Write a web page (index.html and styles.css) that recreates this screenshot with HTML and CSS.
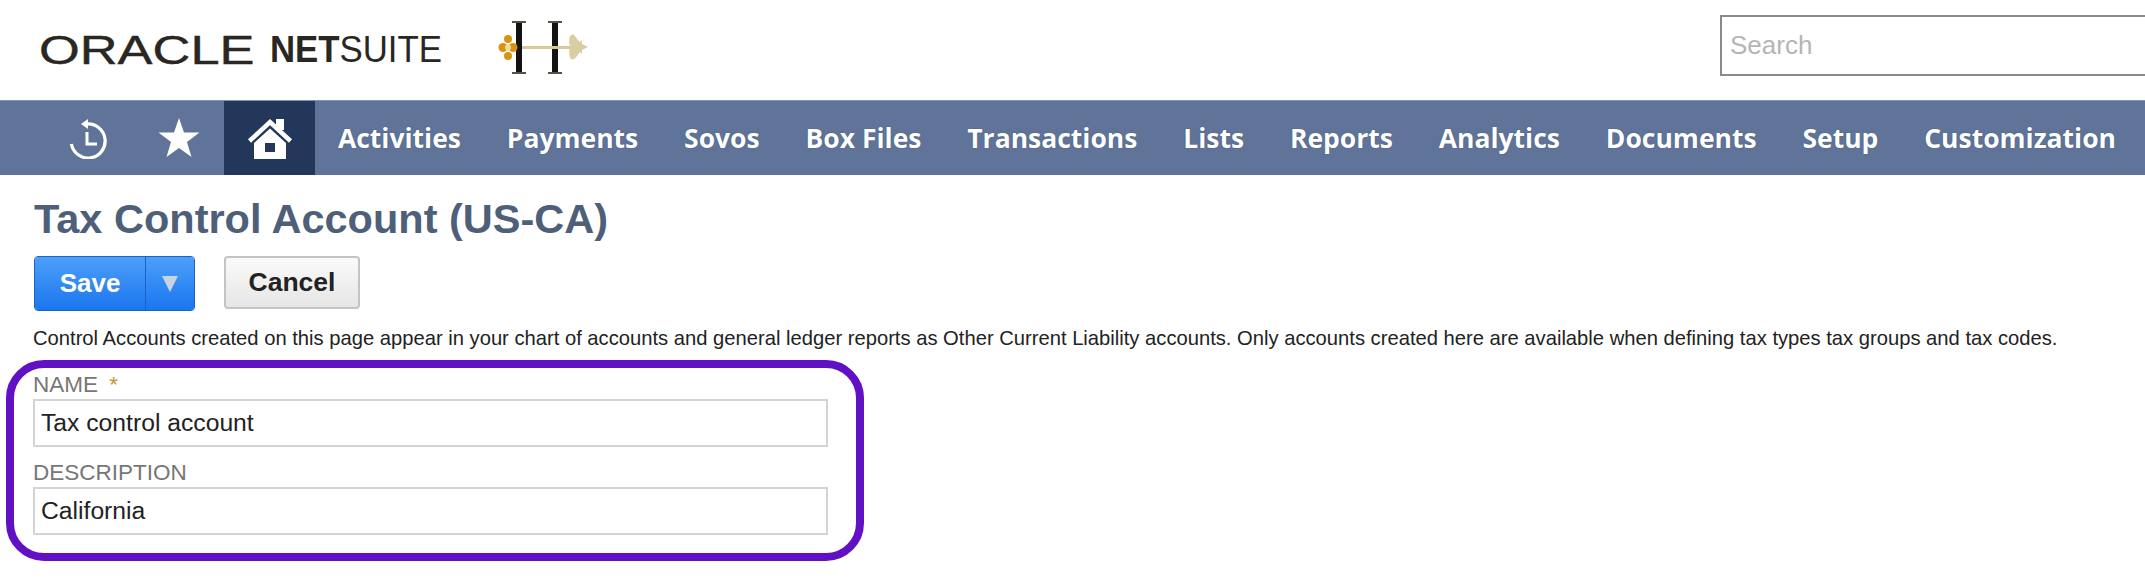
FILE: index.html
```html
<!DOCTYPE html>
<html lang="en">
<head>
    <meta charset="UTF-8">
    <meta name="viewport" content="width=device-width, initial-scale=1.0">
    <title>Tax Control Account (US-CA)</title>
    <link rel="stylesheet" href="styles.css">
</head>
<body>
    <header class="top-bar">
        <div class="logo">
            <span class="logo-oracle">ORACLE</span>
            <span class="logo-netsuite"><b>NET</b>SUITE</span>
        </div>
        <svg class="brand-mark" width="98" height="56" viewBox="0 0 98 56">
            <rect x="24" y="1" width="6" height="51" fill="#15130f"/>
            <rect x="60" y="1" width="6" height="51" fill="#15130f"/>
            <rect x="20" y="0" width="14" height="2" fill="#55524c"/>
            <rect x="20" y="51" width="14" height="2" fill="#55524c"/>
            <rect x="56" y="0" width="14" height="2" fill="#55524c"/>
            <rect x="56" y="51" width="14" height="2" fill="#55524c"/>
            <rect x="30" y="25" width="48" height="3" fill="#d8c998"/>
            <g fill="#d9940f">
                <circle cx="16" cy="18" r="4"/>
                <circle cx="16" cy="35" r="4"/>
                <circle cx="11" cy="26.500" r="4.500"/>
                <circle cx="21" cy="26.500" r="4.500"/>
                <circle cx="16" cy="26.500" r="3" fill="#f0d9a0"/>
            </g>
            <path d="M78 26 C76 18 78 12 82 14 C84 16 86 20 88 21 L90 19 L90 23 L96 26 L90 29 L90 33 L88 31 C86 33 84 37 82 38 C78 40 76 34 78 26 Z" fill="#d9cda4"/>
        </svg>
        <input class="search" type="text" placeholder="Search">
    </header>

    <nav class="main-nav">
        <a class="nav-icon" href="#">
            <svg width="40" height="42" viewBox="0 0 40 42" fill="none" stroke="#fff" stroke-width="3.2">
                <path d="M19 7 A17 17 0 1 1 3.4 27"/>
                <path d="M20 2 L13 7 L20 12 Z" fill="#fff" stroke="none"/>
                <path d="M19 15 V27 H29" stroke-width="3"/>
            </svg>
        </a>
        <a class="nav-icon" href="#">
            <svg width="42" height="40" viewBox="0 0 42 40">
                <polygon points="21,0 26,14.5 41.5,14.5 29,24 33.5,39 21,30 8.5,39 13,24 0.5,14.5 16,14.5" fill="#fff"/>
            </svg>
        </a>
        <a class="nav-icon nav-home" href="#">
            <svg width="46" height="41" viewBox="0 0 46 41">
                <rect x="29" y="1" width="8" height="11" fill="#fff"/>
                <path d="M2.5 23 L23 4 L43.500 23" fill="none" stroke="#fff" stroke-width="4.500"/>
                <path d="M7 25 L23 10.500 L39 25 V41 H7 Z" fill="#fff"/>
                <rect x="18" y="25" width="10" height="9" fill="#22375a"/>
            </svg>
        </a>
        <a class="nav-link" href="#">Activities</a>
        <a class="nav-link" href="#">Payments</a>
        <a class="nav-link" href="#">Sovos</a>
        <a class="nav-link" href="#">Box Files</a>
        <a class="nav-link" href="#">Transactions</a>
        <a class="nav-link" href="#">Lists</a>
        <a class="nav-link" href="#">Reports</a>
        <a class="nav-link" href="#">Analytics</a>
        <a class="nav-link" href="#">Documents</a>
        <a class="nav-link" href="#">Setup</a>
        <a class="nav-link" href="#">Customization</a>
    </nav>

    <main class="content">
        <h1>Tax Control Account (US-CA)</h1>

        <div class="button-row">
            <div class="save-group">
                <button class="btn-save" type="button">Save</button>
                <button class="btn-arrow" type="button" aria-label="More"><span class="arrow"></span></button>
            </div>
            <button class="btn-cancel" type="button">Cancel</button>
        </div>

        <p class="help-text">Control Accounts created on this page appear in your chart of accounts and general ledger reports as Other Current Liability accounts. Only accounts created here are available when defining tax types tax groups and tax codes.</p>

        <form class="highlight-box">
            <label class="field-label" for="name">NAME <span class="required">*</span></label>
            <input class="field-input" id="name" type="text" value="Tax control account">
            <label class="field-label" for="description">DESCRIPTION</label>
            <input class="field-input" id="description" type="text" value="California">
        </form>
    </main>
</body>
</html>
```

FILE: styles.css
```css
body {
    margin: 0;
    height: 582px;
    overflow: hidden;
    background: #fff;
    font-family: 'Liberation Sans', Arial, sans-serif;
}

.top-bar {
    display: flex;
    align-items: center;
    height: 100px;
    padding-left: 39px;
    overflow: hidden;
}

.logo {
    display: flex;
    flex-shrink: 0;
    align-items: center;
    width: 394px;
    color: #2a2622;
    white-space: nowrap;
}

.logo-oracle {
    flex-shrink: 0;
    width: 231px;
    font-size: 40px;
    transform: scaleX(1.31);
    transform-origin: left center;
    -webkit-text-stroke: 0.4px #2a2622;
}

.logo-netsuite {
    flex-shrink: 0;
    font-size: 37px;
    transform: scaleX(0.94);
    transform-origin: left center;
}

.brand-mark {
    flex-shrink: 0;
    margin-top: -2px;
    margin-left: 59px;
}

.search {
    flex-shrink: 0;
    box-sizing: border-box;
    width: 500px;
    height: 61px;
    margin-left: auto;
    margin-right: -75px;
    margin-top: -9px;
    padding: 0 8px;
    border: 2px solid #8a8a8a;
    font-family: inherit;
    font-size: 26px;
}

.search::placeholder {
    color: #b5b5b5;
}

.main-nav {
    display: flex;
    align-items: stretch;
    box-sizing: border-box;
    height: 75px;
    padding-left: 42px;
    background: #5f7498;
    border-top: 1px solid #8194b2;
}

.nav-icon {
    display: flex;
    justify-content: center;
    align-items: center;
    width: 91px;
}

.nav-home {
    background: #22375a;
}

.nav-link {
    display: flex;
    align-items: center;
    padding: 0 22.9px;
    color: #fff;
    font-family: 'Open Sans', sans-serif;
    font-size: 26.5px;
    font-weight: 700;
    text-decoration: none;
    white-space: nowrap;
    text-shadow: 0 0 1px rgba(20, 40, 80, 0.6);
}

.content {
    padding: 0 0 0 6px;
}

h1 {
    margin: 22px 0 0 28px;
    color: #4d5f79;
    font-size: 41.5px;
    line-height: 44px;
    font-weight: 700;
}

.button-row {
    display: flex;
    gap: 29px;
    margin: 15px 0 0 28px;
}

.save-group {
    display: flex;
    height: 53px;
    border: 1px solid #1b62c4;
    border-radius: 4px;
    overflow: hidden;
}

.save-group button {
    border: none;
    background: linear-gradient(#4d9ffa, #1a76ee);
    color: #fff;
}

.btn-save {
    width: 110px;
    font-family: inherit;
    font-size: 26px;
    font-weight: 700;
}

.btn-arrow {
    display: flex;
    justify-content: center;
    align-items: center;
    width: 49px;
    border-left: 1px solid #1b62c4 !important;
}

.arrow {
    width: 0;
    height: 0;
    border-left: 8px solid transparent;
    border-right: 8px solid transparent;
    border-top: 16px solid #c9d3df;
}

.btn-cancel {
    width: 136px;
    height: 53px;
    background: linear-gradient(#fafafa, #e6e6e6);
    border: 2px solid #c4c4c4;
    border-radius: 4px;
    color: #222;
    font-family: inherit;
    font-size: 26.5px;
    font-weight: 700;
}

.help-text {
    margin: 15px 0 0 27px;
    color: #222;
    font-size: 20.2px;
    line-height: 24px;
    white-space: nowrap;
}

.highlight-box {
    display: flex;
    flex-direction: column;
    box-sizing: border-box;
    width: 858px;
    height: 201px;
    margin-top: 10px;
    padding: 0 28px 0 19px;
    border: 8px solid #6210c4;
    border-radius: 38px;
}

.field-label {
    height: 31px;
    color: #777;
    font-size: 22.5px;
    line-height: 33px;
}

.required {
    margin-left: 5px;
    color: #c9922e;
}

.field-input {
    box-sizing: border-box;
    height: 48px;
    margin-bottom: 9px;
    padding: 0 6px;
    border: 2px solid #d4d4d4;
    color: #222;
    font-family: inherit;
    font-size: 24.7px;
}
```
